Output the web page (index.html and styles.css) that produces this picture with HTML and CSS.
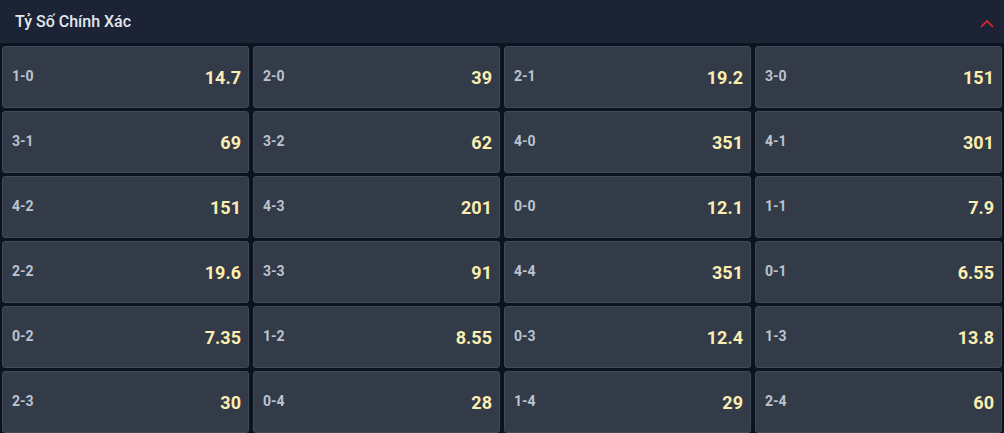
FILE: index.html
```html
<!DOCTYPE html>
<html lang="vi">
<head>
<meta charset="utf-8">
<link rel="stylesheet" href="styles.css">
</head>
<body>
<div class="panel">
  <div class="head">
    <span class="title">Tỷ Số Chính Xác</span>
    <svg class="chev" width="14" height="9" viewBox="0 0 14 9"><path d="M1 8 L7 2 L13 8" fill="none" stroke="#e8262b" stroke-width="1.6"/></svg>
  </div>
  <div class="grid">
    <div class="cell"><span class="sc">1-0</span><span class="od">14.7</span></div>
    <div class="cell"><span class="sc">2-0</span><span class="od">39</span></div>
    <div class="cell"><span class="sc">2-1</span><span class="od">19.2</span></div>
    <div class="cell"><span class="sc">3-0</span><span class="od">151</span></div>
    <div class="cell"><span class="sc">3-1</span><span class="od">69</span></div>
    <div class="cell"><span class="sc">3-2</span><span class="od">62</span></div>
    <div class="cell"><span class="sc">4-0</span><span class="od">351</span></div>
    <div class="cell"><span class="sc">4-1</span><span class="od">301</span></div>
    <div class="cell"><span class="sc">4-2</span><span class="od">151</span></div>
    <div class="cell"><span class="sc">4-3</span><span class="od">201</span></div>
    <div class="cell"><span class="sc">0-0</span><span class="od">12.1</span></div>
    <div class="cell"><span class="sc">1-1</span><span class="od">7.9</span></div>
    <div class="cell"><span class="sc">2-2</span><span class="od">19.6</span></div>
    <div class="cell"><span class="sc">3-3</span><span class="od">91</span></div>
    <div class="cell"><span class="sc">4-4</span><span class="od">351</span></div>
    <div class="cell"><span class="sc">0-1</span><span class="od">6.55</span></div>
    <div class="cell"><span class="sc">0-2</span><span class="od">7.35</span></div>
    <div class="cell"><span class="sc">1-2</span><span class="od">8.55</span></div>
    <div class="cell"><span class="sc">0-3</span><span class="od">12.4</span></div>
    <div class="cell"><span class="sc">1-3</span><span class="od">13.8</span></div>
    <div class="cell"><span class="sc">2-3</span><span class="od">30</span></div>
    <div class="cell"><span class="sc">0-4</span><span class="od">28</span></div>
    <div class="cell"><span class="sc">1-4</span><span class="od">29</span></div>
    <div class="cell"><span class="sc">2-4</span><span class="od">60</span></div>
  </div>
</div>
</body>
</html>
```
FILE: styles.css
```css
html, body {
  margin: 0;
  padding: 0;
  background: #0b1220;
  font-family: Roboto, "Liberation Sans", Arial, sans-serif;
}
.panel {
  width: 1004px;
  height: 433px;
  overflow: hidden;
  background: #0b1220;
}
.head {
  height: 44px;
  background: #1b2334;
  display: flex;
  align-items: center;
  justify-content: space-between;
  padding: 0 10px 0 15px;
  box-sizing: border-box;
  border-bottom: 1px solid #0e1626;
}
.title {
  color: #e3e7ee;
  font-size: 16px;
  font-weight: 500;
  margin-top: -1px;
}
.chev {
  margin-top: 3px;
}
.grid {
  display: grid;
  grid-template-columns: repeat(4, 1fr);
  grid-auto-rows: 62px;
  column-gap: 4px;
  row-gap: 3px;
  padding: 2px 2px;
}
.cell {
  background: #333b48;
  border: 1px solid #414a58;
  border-radius: 3px;
  box-sizing: border-box;
  display: flex;
  align-items: center;
  justify-content: space-between;
  padding: 0 7px 0 9px;
}
.sc {
  color: #bcc4d0;
  font-size: 14px;
  font-weight: 700;
  margin-top: -3px;
}
.od {
  color: #fbeeb1;
  font-size: 18px;
  font-weight: 700;
  margin-top: 1px;
}
```
